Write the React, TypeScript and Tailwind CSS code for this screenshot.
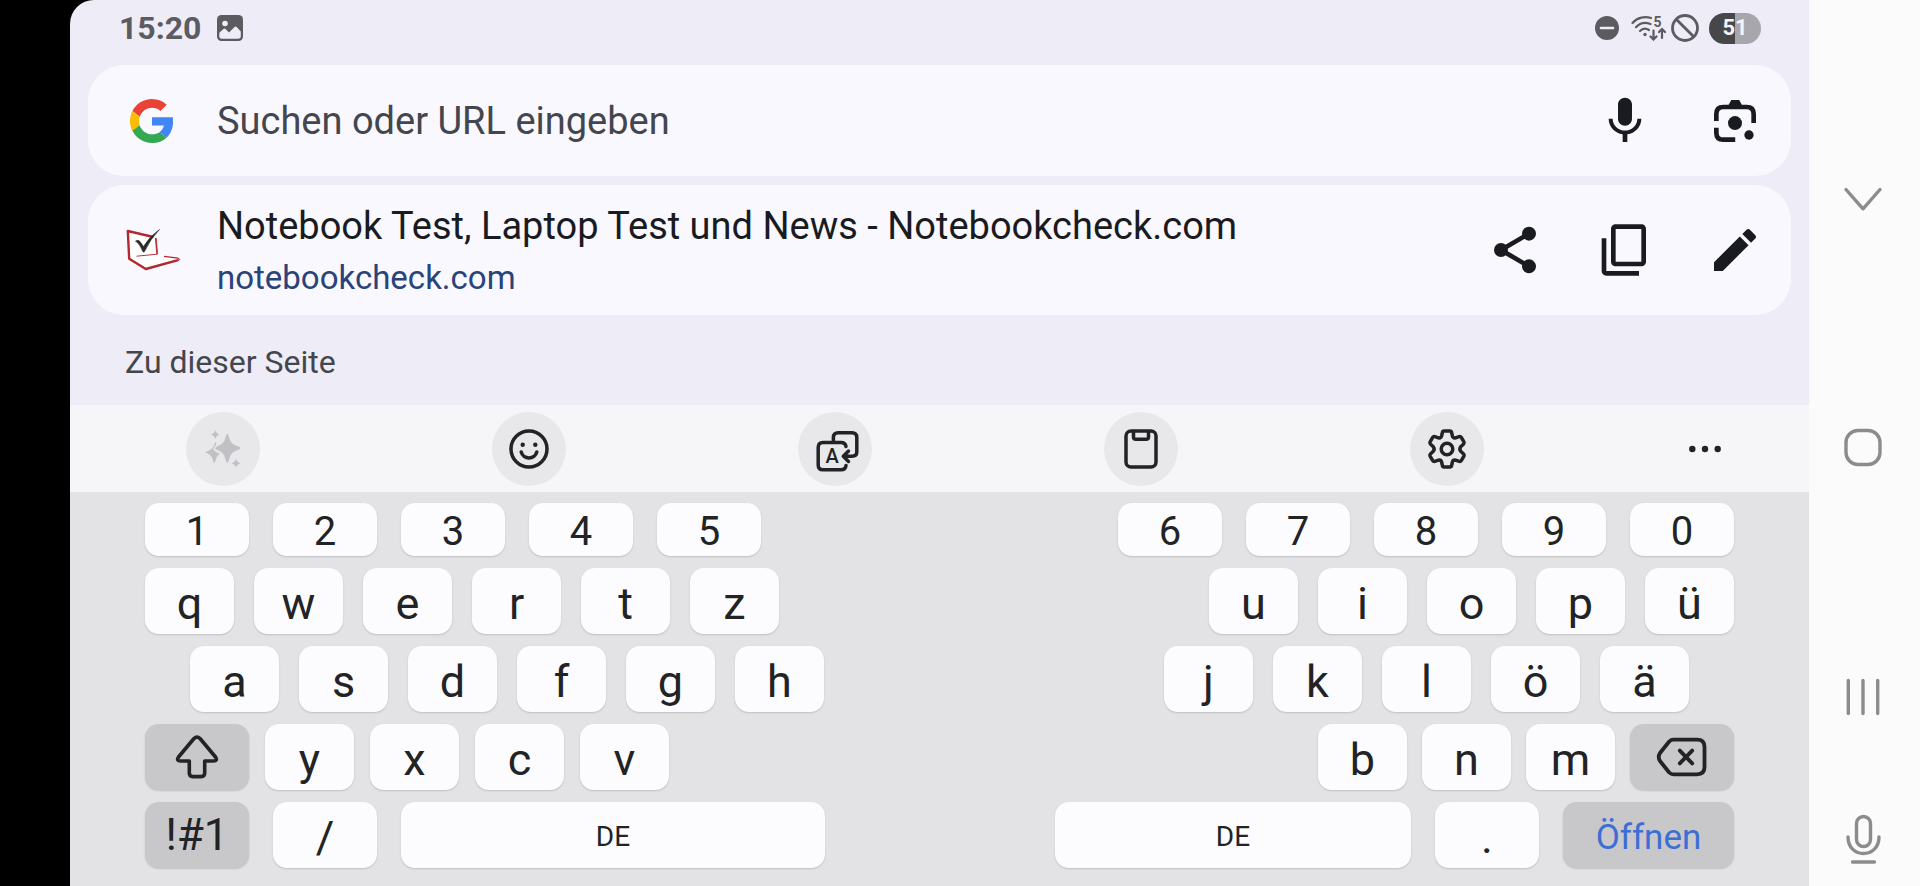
import type { ReactNode } from "react";

const ICON = "block size-14 fill-[#1a1b20]";
const LINE = "block fill-none stroke-[#222325]";

function StatusBar() {
  return (
    <div className="flex h-[65px] items-start justify-between pt-3 pr-12 pl-[49px]">
      <div className="flex h-8 items-center gap-4">
        <span className="text-[32px] leading-8 font-bold text-[#5b5b61]">15:20</span>
        <svg viewBox="0 0 26 26" className="size-[26px]" role="img" aria-label="Screenshot">
          <rect width="26" height="26" rx="4.5" fill="#5b5b61" />
          <circle cx="8" cy="8.5" r="2.8" fill="#eeecf6" />
          <path
            d="M2.5 17.500 L6.800 13.700 Q7.500 13.100 8.200 13.700 L12 17.500 L17.800 11.800 Q18.800 11 19.700 11.900 L23.800 16.500 V21 Q23.800 23.800 21 23.800 H5 Q2.200 23.800 2.200 21 Z"
            fill="#eeecf6"
          />
        </svg>
      </div>
      <div className="flex h-8 items-center">
        <svg viewBox="0 0 24 24" className="mr-3 size-6" role="img" aria-label="Bitte nicht stören">
          <circle cx="12" cy="12" r="12" fill="#5b5b61" />
          <path d="M6 12 H18" stroke="#eeecf6" strokeWidth="2.600" strokeLinecap="round" />
        </svg>
        <svg viewBox="0 0 36 26" className="mr-1 h-[26px] w-9" role="img" aria-label="WLAN">
          <g fill="none" stroke="#5b5b61" strokeWidth="2.200" strokeLinecap="round">
            <path d="M1.500 8 C6.500 2.200 14 1 20 3" />
            <path d="M5 12.200 C9 7.600 14.500 7 19.500 9" />
            <path d="M9 16 C11.500 13.400 15 13 18 15" />
            <path d="M22.500 15.500 V24 M19.500 21.500 L22.500 24.500 L25.500 21.500" />
            <path d="M31 23 V14.500 M28 17 L31 14 L34 17" />
          </g>
          <circle cx="14" cy="19.500" r="1.700" fill="#5b5b61" />
          <text x="22.500" y="12" fontSize="14" fontWeight="700" fill="#5b5b61">5</text>
        </svg>
        <svg viewBox="0 0 28 28" className="mr-[10px] size-7" role="img" aria-label="Kein Netz">
          <g fill="none" stroke="#5b5b61" strokeWidth="2.800">
            <circle cx="14" cy="14" r="12.500" />
            <path d="M5.500 5.500 L22.500 22.500" />
          </g>
        </svg>
        <div className="flex h-[31px] w-[52px] items-center justify-center rounded-full bg-linear-to-r from-[#474749] from-50% to-[#a6a6ac] to-50%">
          <span className="text-[22px] leading-6 font-bold text-[#f4f3fa]">51</span>
        </div>
      </div>
    </div>
  );
}

function GoogleLogo() {
  return (
    <svg viewBox="0 0 48 48" className="size-11" role="img" aria-label="Google">
      <path fill="#EA4335" d="M24 9.500c3.540 0 6.710 1.220 9.210 3.600l6.850-6.850C35.900 2.380 30.470 0 24 0 14.620 0 6.510 5.380 2.560 13.220l7.980 6.190C12.430 13.720 17.740 9.500 24 9.500z" />
      <path fill="#4285F4" d="M46.980 24.550c0-1.570-.15-3.090-.38-4.550H24v9.020h12.940c-.58 2.960-2.260 5.480-4.780 7.180l7.730 6c4.510-4.180 7.090-10.360 7.090-17.650z" />
      <path fill="#FBBC05" d="M10.530 28.590c-.48-1.450-.76-2.990-.76-4.590s.27-3.140.76-4.590l-7.980-6.190C.92 16.460 0 20.120 0 24c0 3.880.92 7.540 2.560 10.780l7.970-6.190z" />
      <path fill="#34A853" d="M24 48c6.480 0 11.930-2.130 15.890-5.810l-7.730-6c-2.150 1.450-4.920 2.300-8.160 2.300-6.260 0-11.570-4.220-13.470-9.910l-7.980 6.190C6.510 42.620 14.620 48 24 48z" />
    </svg>
  );
}

function SiteIcon() {
  return (
    <svg viewBox="0 0 54 42" className="-ml-1 h-[42px] w-[54px]" role="img" aria-label="Notebookcheck">
      <path d="M1.500 2 L30 8.500 L31.500 25.500 L52 29.500 Q53.500 30.500 52 31.500 L20 40.500 L2.500 30.500 Z" fill="#fff" />
      <path d="M29.800 9 L31.200 25.200" fill="none" stroke="#b8343a" strokeWidth="1.800" />
      <path d="M31.200 25.200 L10.500 27.200" fill="none" stroke="#b8343a" strokeWidth="1" />
      <path d="M27.500 8 L1.800 2 L3.200 29.800 L19.800 40 L52 31.200" fill="none" stroke="#b3272d" strokeWidth="2.400" strokeLinejoin="round" />
      <path d="M52 31.500 Q54.500 30 52 29.200 L38 27.300" fill="none" stroke="#b3272d" strokeWidth="1.200" />
      <path d="M9.500 12 Q12.500 10.500 14 12.500 L17.500 17.500 Q23 8 33.500 .5 Q25 9 18.500 22.500 Q17.500 24 16.500 22 Q14 15 9.500 12 Z" fill="#2a2a2a" stroke="#2a2a2a" strokeWidth="0.600" />
    </svg>
  );
}

function IconButton({ label, children }: { label: string; children: ReactNode }) {
  return (
    <button type="button" aria-label={label} className="size-14">
      {children}
    </button>
  );
}

function SearchCard() {
  return (
    <div className="flex h-[111px] items-center rounded-[36px] bg-[#f9f8ff] pr-7 pl-[42px]">
      <GoogleLogo />
      <input
        type="text"
        aria-label="Suchen oder URL eingeben"
        placeholder="Suchen oder URL eingeben"
        className="ml-[43px] min-w-0 flex-1 bg-transparent text-[38px] leading-[48px] text-[#1a1b20] outline-none placeholder:text-[#44464e] placeholder:opacity-100"
      />
      <div className="flex gap-[54px]">
        <IconButton label="Sprachsuche">
          <svg viewBox="0 0 24 24" className={ICON}>
            <path d="M12 14c1.660 0 2.990-1.340 2.990-3L15 5c0-1.660-1.340-3-3-3S9 3.340 9 5v6c0 1.660 1.340 3 3 3zm5.300-3c0 3-2.540 5.100-5.300 5.100S6.700 14 6.700 11H5c0 3.410 2.720 6.230 6 6.720V21h2v-3.280c3.280-.48 6-3.300 6-6.720h-1.700z" />
          </svg>
        </IconButton>
        <IconButton label="Google Lens">
          <svg viewBox="0 0 24 24" className={ICON}>
            <path d="M4 12 V9 Q4 6 7 6 H17 Q20 6 20 9 V12.900 M4 14.900 V17 Q4 20 7 20 H12.100" fill="none" stroke="#1a1b20" strokeWidth="2" />
            <path d="M10.400 3 H13.800 L15.200 5.600 H9 Z" />
            <circle cx="12" cy="12.900" r="3" />
            <circle cx="18" cy="18" r="2" />
          </svg>
        </IconButton>
      </div>
    </div>
  );
}

function SuggestionCard() {
  return (
    <div className="flex h-[130px] items-center rounded-[36px] bg-[#f9f8ff] pr-7 pl-[42px]">
      <SiteIcon />
      <a href="#notebookcheck" className="ml-[37px] min-w-0 flex-1 pt-1">
        <span className="block truncate text-[38px] leading-[52px] text-[#1a1b20]">
          Notebook Test, Laptop Test und News - Notebookcheck.com
        </span>
        <span className="block truncate text-[33px] leading-[52px] text-[#2a4379]">notebookcheck.com</span>
      </a>
      <div className="flex gap-[54px]">
        <IconButton label="Teilen">
          <svg viewBox="0 0 24 24" className={ICON}>
            <path d="M6 12 L18 5 M6 12 L18 19" stroke="#1a1b20" strokeWidth="2" />
            <circle cx="18" cy="5" r="3" />
            <circle cx="6" cy="12" r="3" />
            <circle cx="18" cy="19" r="3" />
          </svg>
        </IconButton>
        <IconButton label="Kopieren">
          <svg viewBox="0 0 24 24" className={ICON}>
            <path d="M18 21H4V7H2v14c0 1.100.9 2 2 2h14v-2zM21 17V3c0-1.100-.9-2-2-2H8c-1.100 0-2 .9-2 2v14c0 1.100.9 2 2 2h11c1.100 0 2-.9 2-2zm-2 0H8V3h11v14z" />
          </svg>
        </IconButton>
        <IconButton label="Bearbeiten">
          <svg viewBox="0 0 24 24" className={ICON}>
            <path d="M3 17.250V21h3.750L17.810 9.940l-3.750-3.750L3 17.250zM20.710 7.040c.39-.39.39-1.020 0-1.410l-2.340-2.340c-.39-.39-1.020-.39-1.410 0l-1.830 1.830 3.750 3.750 1.830-1.830z" />
          </svg>
        </IconButton>
      </div>
    </div>
  );
}

const TOOLS: { label: string; icon: ReactNode }[] = [
  {
    label: "KI-Assistent",
    icon: (
      <g fill="#c1c1c5" stroke="none">
        <path d="M4.300 -15.500 Q5.200 -15.500 6 -12 Q7.500 -5 13.500 -3.200 Q17.300 -2 17.300 -.8 Q17.300 .3 13.500 1.500 Q7.500 3.500 6 10.500 Q5.200 14 4.300 14 Q3.400 14 2.600 10.500 Q1 3.500 -4.500 1.500 Q-8 .3 -8 -.8 Q-8 -2 -4.500 -3.200 Q1 -5 2.600 -12 Q3.400 -15.500 4.300 -15.500 Z" />
        <path d="M-7.500 -7 Q-8.500 -5 -9.300 -3 Q-9.800 -2 -10.500 -1 Q-12.500 1.500 -16.500 2.700 Q-18.500 3.300 -16.500 4 Q-11.500 5.500 -10.300 11 Q-8.800 17 -7.300 11 Q-6.300 6.500 -2.800 4.800 Q-8.500 3 -9.800 0 Q-9.300 -2 -7 -4 Q-6.500 -7 -7.500 -7 Z" />
        <path d="M-7.700 -19 Q-7 -15.500 -3.500 -14.600 Q-7 -13.600 -7.700 -10 Q-8.400 -13.600 -11.900 -14.600 Q-8.400 -15.500 -7.700 -19 Z" />
        <path d="M13 9.500 Q13.700 13.200 17.500 14.200 Q13.700 15.200 13 19 Q12.300 15.200 8.500 14.200 Q12.300 13.200 13 9.500 Z" />
      </g>
    ),
  },
  {
    label: "Emojis",
    icon: (
      <>
        <circle r="18" />
        <circle cx="-6.300" cy="-4.200" r="2.200" fill="#222325" stroke="none" />
        <circle cx="6.300" cy="-4.200" r="2.200" fill="#222325" stroke="none" />
        <path d="M-7.800 3 A8.100 8.100 0 0 0 7.800 3" strokeLinecap="round" />
      </>
    ),
  },
  {
    label: "Übersetzen",
    icon: (
      <>
        <path
          d="M-1.600 -7.500 V-11.500 Q-1.600 -16.300 3.200 -16.300 H17 Q21.800 -16.300 21.800 -11.500 V3 Q21.800 7.200 17 7.200 H9 M13.500 2 L8.300 7.200 L13.500 12.400 M11 -2.500 Q10.500 -6.600 6 -6.600 H-12 Q-16.800 -6.600 -16.800 -1.800 V16 Q-16.800 20.800 -12 20.800 H6 Q10.500 20.800 11 16.500"
          strokeLinecap="round"
          strokeLinejoin="round"
        />
        <text x="-3" y="14" textAnchor="middle" fontSize="20" fontWeight="500" fill="#222325" stroke="none">A</text>
      </>
    ),
  },
  {
    label: "Zwischenablage",
    icon: (
      <>
        <rect x="-15" y="-18" width="30" height="36" rx="5" />
        <path d="M-7.500 -17 V-12 Q-7.500 -9.700 -5.200 -9.700 H5.200 Q7.500 -9.700 7.500 -12 V-17" />
      </>
    ),
  },
  {
    label: "Einstellungen",
    icon: (
      <>
        <path
          d="M-3 -18 H3 Q4.300 -18 4.600 -16.600 L5.400 -13 Q6.200 -10.600 8.600 -11.200 L12.200 -12.400 Q13.600 -12.700 14.300 -11.600 L16.900 -7.100 Q17.500 -5.900 16.600 -5 L13.700 -2.300 Q12 0 13.700 2.300 L16.600 5 Q17.500 5.900 16.900 7.100 L14.300 11.600 Q13.600 12.700 12.200 12.400 L8.600 11.200 Q6.200 10.600 5.400 13 L4.600 16.600 Q4.300 18 3 18 H-3 Q-4.300 18 -4.600 16.600 L-5.400 13 Q-6.200 10.600 -8.600 11.200 L-12.200 12.400 Q-13.600 12.700 -14.300 11.600 L-16.900 7.100 Q-17.500 5.900 -16.600 5 L-13.700 2.300 Q-12 0 -13.700 -2.300 L-16.600 -5 Q-17.500 -5.900 -16.900 -7.100 L-14.300 -11.600 Q-13.600 -12.700 -12.200 -12.400 L-8.600 -11.200 Q-6.200 -10.600 -5.400 -13 L-4.600 -16.600 Q-4.300 -18 -3 -18 Z"
          strokeLinejoin="round"
        />
        <circle r="5.800" />
      </>
    ),
  },
];

function Toolbar() {
  return (
    <div className="flex h-[87px] items-center bg-[#f6f6f9]">
      {TOOLS.map((tool) => (
        <div key={tool.label} className="flex flex-1 justify-center">
          <button type="button" aria-label={tool.label} className="size-[74px] rounded-full bg-[#e8e8eb]">
            <svg viewBox="-37 -37 74 74" strokeWidth="3.500" className={LINE}>
              {tool.icon}
            </svg>
          </button>
        </div>
      ))}
      <div className="flex w-[209px] justify-center">
        <button type="button" aria-label="Mehr" className="size-[74px]">
          <svg viewBox="-37 -37 74 74" className="block fill-[#222325]">
            <circle cx="-12.700" r="3.200" />
            <circle r="3.200" />
            <circle cx="12.700" r="3.200" />
          </svg>
        </button>
      </div>
    </div>
  );
}

function Key({ children, className, label }: { children: ReactNode; className: string; label?: string }) {
  return (
    <button
      type="button"
      aria-label={label}
      className={`flex items-center justify-center rounded-[14px] shadow-[0_1px_2px_rgba(0,0,0,0.16)] ${className}`}
    >
      {children}
    </button>
  );
}

const NUMBER = "h-[53px] w-[104px] bg-[#fcfcff] pt-1 text-[40px]";
const LETTER = "h-[66px] w-[89px] bg-[#fcfcff] pt-1 text-[45px]";
const WIDE = "h-[66px] w-[104px] bg-[#fcfcff] pt-1 text-[45px]";
const MODIFIER = "h-[66px] w-[104px] bg-[#c8c8cb] text-[44px]";

function Keys({ chars, className }: { chars: string; className: string }) {
  return (
    <>
      {chars.split("").map((char) => (
        <Key key={char} className={className}>
          {char}
        </Key>
      ))}
    </>
  );
}

function Keyboard() {
  return (
    <div className="flex flex-1 flex-col gap-3 bg-[#e3e3e5] px-[75px] pt-[11px] pb-4 leading-none text-[#222325]">
      <div className="flex justify-between">
        <div className="flex gap-6">
          <Keys chars="12345" className={NUMBER} />
        </div>
        <div className="flex gap-6">
          <Keys chars="67890" className={NUMBER} />
        </div>
      </div>
      <div className="flex justify-between">
        <div className="flex gap-5">
          <Keys chars="qwertz" className={LETTER} />
        </div>
        <div className="flex gap-5">
          <Keys chars="uiopü" className={LETTER} />
        </div>
      </div>
      <div className="flex justify-between px-[45px]">
        <div className="flex gap-5">
          <Keys chars="asdfgh" className={LETTER} />
        </div>
        <div className="flex gap-5">
          <Keys chars="jklöä" className={LETTER} />
        </div>
      </div>
      <div className="flex justify-between">
        <div className="flex gap-4">
          <Key label="Umschalt" className={MODIFIER}>
            <svg viewBox="-22 -22 44 44" strokeWidth="3.600" className={`size-11 ${LINE}`}>
              <path
                d="M-3 -18.500 Q0 -21.500 3 -18.500 L18.500 0 Q21 4 16.500 4 H7.700 V16 Q7.700 19.600 4.200 19.600 H-4.200 Q-7.700 19.600 -7.700 16 V4 H-16.500 Q-21 4 -18.500 0 Z"
                strokeLinejoin="round"
              />
            </svg>
          </Key>
          <Keys chars="yxcv" className={LETTER} />
        </div>
        <div className="flex gap-[15px]">
          <Keys chars="bnm" className={LETTER} />
          <Key label="Löschen" className={MODIFIER}>
            <svg viewBox="-26 -22 52 44" strokeWidth="3.800" className={`h-11 w-[52px] ${LINE}`}>
              <path
                d="M-8.500 -17.300 H15 Q22.500 -17.300 22.500 -10 V10 Q22.500 17.300 15 17.300 H-8.500 Q-11 17.300 -12.800 15.500 L-22 4 Q-24.500 0 -22 -4 L-12.800 -15.500 Q-11 -17.300 -8.500 -17.300 Z"
                strokeLinejoin="round"
              />
              <path d="M-2.200 -6.400 L10.200 6.400 M10.200 -6.400 L-2.200 6.400" strokeLinecap="round" />
            </svg>
          </Key>
        </div>
      </div>
      <div className="flex justify-between">
        <div className="flex gap-6">
          <Key className={MODIFIER}>!#1</Key>
          <Key className={WIDE}>/</Key>
          <Key className="h-[66px] w-[424px] bg-[#fcfcff] pt-1 text-[28px]">DE</Key>
        </div>
        <div className="flex gap-6">
          <Key className="h-[66px] w-[356px] bg-[#fcfcff] pt-1 text-[28px]">DE</Key>
          <Key className={WIDE}>.</Key>
          <Key className="h-[66px] w-[171px] bg-[#c8c8cb] pt-1 text-[35px] text-[#3d6ed4]">Öffnen</Key>
        </div>
      </div>
    </div>
  );
}

function NavButton({ label, children, className = "" }: { label: string; children: ReactNode; className?: string }) {
  return (
    <button type="button" aria-label={label} className={`size-16 ${className}`}>
      <svg viewBox="-32 -32 64 64" strokeWidth="3.400" className="block fill-none stroke-[#8c8c8c]">
        {children}
      </svg>
    </button>
  );
}

function NavigationBar() {
  return (
    <nav className="flex w-[111px] shrink-0 flex-col items-center bg-[#fbfbfb] pt-[167px] pr-[3px]">
      <div className="flex flex-1 flex-col items-center justify-between">
        <NavButton label="Tastatur ausblenden">
          <path d="M-17 -9.500 L0 9.800 L17 -9.500" strokeLinecap="round" strokeLinejoin="round" />
        </NavButton>
        <NavButton label="Startbildschirm">
          <rect x="-17" y="-17.500" width="34" height="34" rx="12" />
        </NavButton>
        <NavButton label="Letzte Apps">
          <path d="M-14.700 -16.500 V16.500 M0 -16.500 V16.500 M14.700 -16.500 V16.500" strokeLinecap="round" />
        </NavButton>
      </div>
      <NavButton label="Spracheingabe" className="mt-[77px] mb-4">
        <rect x="-6.500" y="-21.500" width="14" height="30" rx="7" />
        <path d="M-15 1 C-15 23 16 23 16 1 M-10.500 26 H11.500" strokeLinecap="round" transform="translate(0 -2)" />
      </NavButton>
    </nav>
  );
}

export default function App() {
  return (
    <div className="flex min-h-screen bg-black font-[Roboto,'Noto_Sans',sans-serif]">
      <main className="ml-[70px] flex min-w-0 flex-1 flex-col overflow-hidden rounded-tl-[24px] bg-[#eeecf6]">
        <StatusBar />
        <div className="flex flex-col gap-[9px] px-[18px]">
          <SearchCard />
          <SuggestionCard />
        </div>
        <h2 className="flex h-[90px] items-center pt-1 pl-[55px] text-[32px] text-[#44464e]">Zu dieser Seite</h2>
        <Toolbar />
        <Keyboard />
      </main>
      <NavigationBar />
    </div>
  );
}
